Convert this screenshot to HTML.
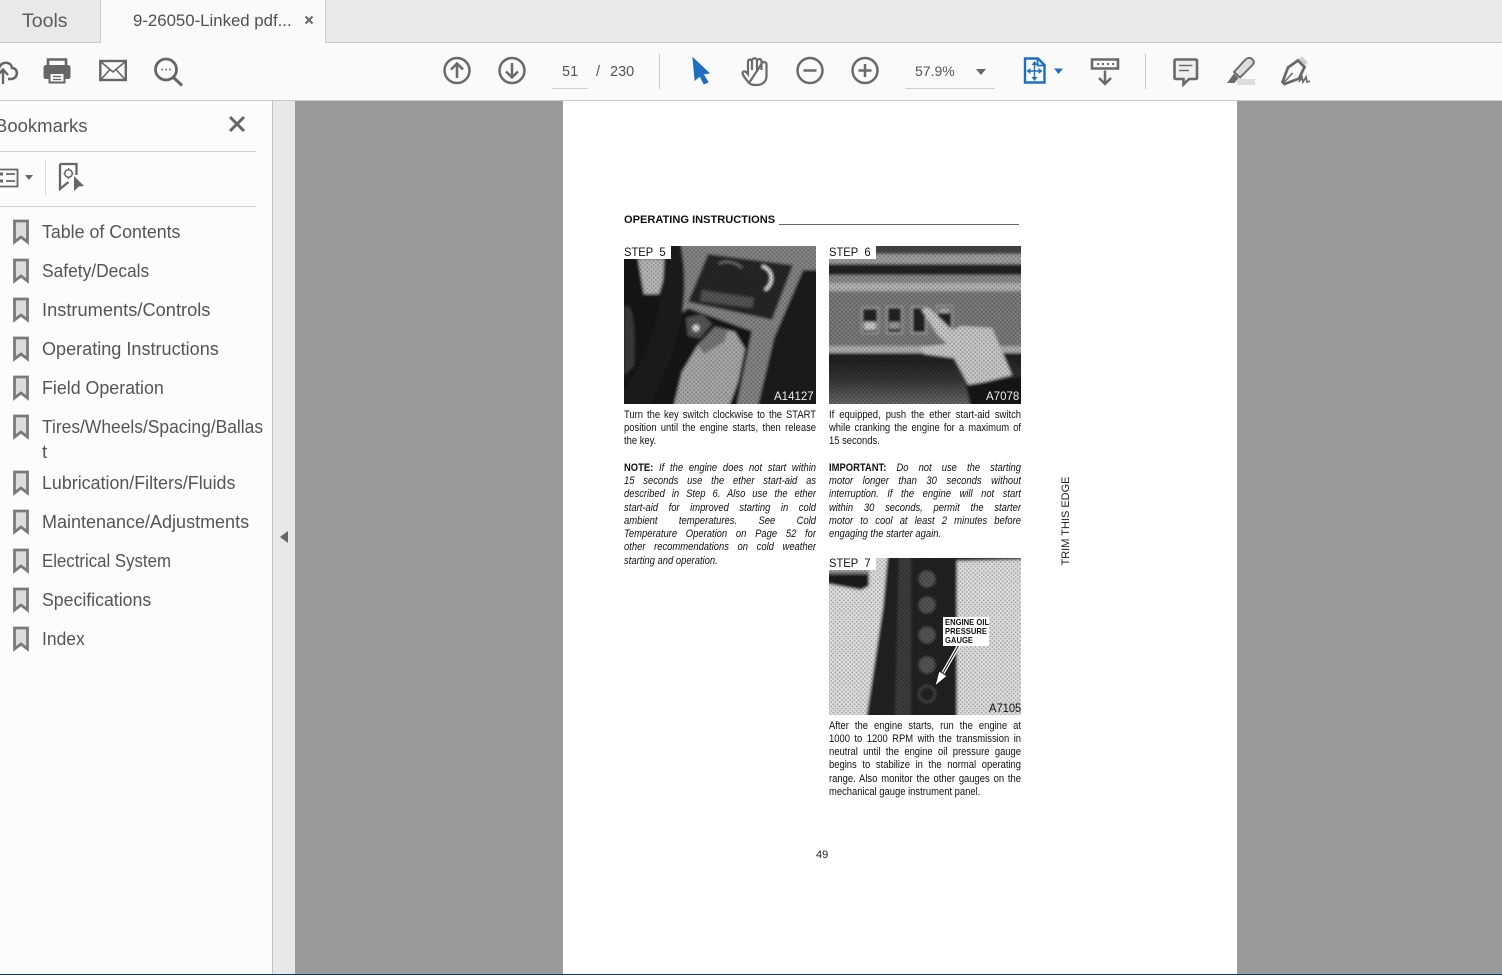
<!DOCTYPE html>
<html><head><meta charset="utf-8"><title>9-26050-Linked pdf</title>
<style>
html,body{margin:0;padding:0;width:1502px;height:975px;overflow:hidden;background:#fff;font-family:"Liberation Sans",sans-serif}
div{position:absolute}
svg{position:absolute;overflow:hidden}
.t{color:#505050;white-space:nowrap}
.bm{left:42px;font-size:18.7px;line-height:24px;color:#555;white-space:nowrap;transform-origin:0 0}
.l{width:222px;height:14px;overflow:hidden;transform:scaleX(.865);transform-origin:0 0;font-size:10.9px;line-height:13px;color:#111;text-align:justify;text-align-last:justify}
.e{text-align-last:left}
.i{font-style:italic}
.a{left:624px}.b{left:829px}
.s{font-size:11.5px;line-height:13px;color:#111;white-space:nowrap}
</style></head><body>

<!-- Tab bar -->
<div style="left:0;top:0;width:1502px;height:42px;background:#e9e9e9"></div>
<div style="left:0;top:42px;width:1502px;height:1px;background:#c9c9c9"></div>
<div style="left:100px;top:0;width:1px;height:43px;background:#cfcfcf"></div>
<div style="left:101px;top:0;width:224px;height:43px;background:#fafafa"></div>
<div style="left:325px;top:0;width:1px;height:43px;background:#cfcfcf"></div>
<div class="t" style="left:22px;top:9px;font-size:19.5px;line-height:24px;color:#5c5c5c">Tools</div>
<div class="t" style="left:133px;top:10px;font-size:16.8px;line-height:22px;color:#505050">9-26050-Linked pdf...</div>
<svg style="left:304px;top:15px" width="10" height="10" viewBox="0 0 10 10"><path d="M1.500 1.500L8.500 8.500M8.500 1.500L1.500 8.500" stroke="#666" stroke-width="2"/></svg>

<!-- Toolbar -->
<div style="left:0;top:43px;width:1502px;height:57px;background:#fafafa"></div>
<div style="left:0;top:100px;width:1502px;height:1px;background:#cacaca"></div>

<svg style="left:0;top:50px" width="340" height="45" viewBox="0 50 340 45" fill="none" stroke="#666" stroke-width="2.600">
 <!-- upload cloud -->
 <path d="M-5 79C-10 74 -7 68 -1 68C1 61 11 61 12 68C18 68 19 77 12 79H8"/>
 <path d="M3 84V70M-2 75L3 69.500L8 75" stroke-width="2.400"/>
 <!-- print -->
 <path d="M48 66V59.500H66V66" stroke-width="2.600"/>
 <path d="M46 65H68Q70.500 65 70.500 68V77Q70.500 79 68 79H46Q43.500 79 43.500 77V68Q43.500 65 46 65Z" fill="#666" stroke="none"/>
 <rect x="49.500" y="73" width="15" height="9.500" fill="#fafafa" stroke-width="2"/>
 <path d="M53 76.500H61M53 79.500H61" stroke-width="1.200"/>
 <!-- mail -->
 <rect x="100.300" y="61" width="25.500" height="19" stroke-width="2.400"/>
 <path d="M100.500 61.500L113 72L125.500 61.500M100.500 80L110 69.500M125.500 80L116 69.500" stroke-width="1.600"/>
 <!-- search -->
 <circle cx="166" cy="69.500" r="10.500" stroke-width="2.800"/>
 <path d="M173.500 77.500L182 85.500" stroke-width="3"/>
 <path d="M161.500 69.500h1.600M165.300 69.500h1.600M169.100 69.500h1.600" stroke-width="1.800"/>
</svg>

<svg style="left:430px;top:50px" width="900" height="45" viewBox="430 50 900 45" fill="none" stroke="#6a6a6a" stroke-width="2.500">
 <circle cx="457" cy="70.500" r="12.500"/><path d="M457 78V63.500M451 69.500L457 63.500L463 69.500"/>
 <circle cx="512" cy="70.500" r="12.500"/><path d="M512 63V77.500M506 71.500L512 77.500L518 71.500"/>
 <path d="M693 58L709 73L703 74L708 82L704 84L700 76L695 80Z" fill="#1f6fc1" stroke="#1f6fc1" stroke-width="1"/>
 <path d="M749 83C746 79 741 74 743 72C745 70 748 74 748 74V63M748 66V61.500C748 59 752 59 752 61.500V70M752 60.500C752 57.500 757 57.500 757 60.500V70M757 61C757 58.500 761.500 58.500 761.500 61V70M761.500 64C761.500 61.500 766.500 61.500 766.500 64V76C766.500 81 763 85 757 85C753.500 85 751 85 749 83Z" stroke-width="2.200"/>
 <circle cx="810" cy="70.500" r="12.500"/><path d="M803.500 70.500H816.500"/>
 <circle cx="865" cy="70.500" r="12.500"/><path d="M858.500 70.500H871.500M865 64V77"/>
 <path d="M976 69H986L981 75Z" fill="#666" stroke="none"/>
 <!-- fit page -->
 <path d="M1025 58.500H1038L1044.500 65V82.500H1025Z" stroke="#1f6fc1" stroke-width="2.400"/>
 <path d="M1037.500 58.500V65.500H1044.500" stroke="#1f6fc1" stroke-width="1.800"/>
 <path d="M1034.500 63V79M1028 71H1041" stroke="#1f6fc1" stroke-width="1.400"/>
 <path d="M1034.500 61L1037.500 65H1031.500ZM1034.500 81L1037.500 77H1031.500ZM1026.500 71L1030.500 68V74ZM1042.500 71L1038.500 68V74Z" fill="#1f6fc1" stroke="none"/>
 <path d="M1054 68.500H1063L1058.500 74Z" fill="#1f6fc1" stroke="none"/>
 <!-- scroll -->
 <path d="M1092 59.500H1118V68.500H1092Z" stroke-width="2.600"/>
 <path d="M1097 64h2M1102 64h2M1107 64h2M1112 64h2" stroke-width="2"/>
 <path d="M1105 70.500V84M1099 78L1105 84L1111 78" stroke-width="2.500"/>
 <!-- comment -->
 <path d="M1176 59.500H1195.500Q1197 59.500 1197 61V77.500Q1197 79 1195.500 79H1189L1183.500 84.500V79H1176Q1174.500 79 1174.500 77.500V61Q1174.500 59.500 1176 59.500Z" fill="#f0f0f0" stroke-width="2.600"/>
 <path d="M1179 65.500H1192.500M1179 70.500H1189" stroke-width="1.500"/>
 <!-- highlight -->
 <rect x="1237" y="79" width="18" height="6" fill="#dcdcdc" stroke="none"/>
 <path d="M1234 72L1246 59C1248 57.500 1251 57.500 1252.500 59.500C1254.500 61.500 1254 63.500 1252.500 65L1240 77.500Z" fill="#dedede" stroke="#6a6a6a" stroke-width="1.900"/>
 <path d="M1234 73.500L1238.500 78L1234.500 83L1227 83Z" fill="#6a6a6a" stroke="none"/>
 <!-- sign -->
 <path d="M1300 58L1306 64" stroke="#cfcfcf" stroke-width="5"/>
 <path d="M1298 60.500L1304.500 67L1299 78.500L1284.500 84L1282.500 82L1288 67.500Z" stroke-width="2.800"/>
 <path d="M1283.500 83L1292.500 73" stroke-width="1.600"/>
 <path d="M1299 82L1302 77L1303 82L1306 77L1307 82L1310 81" stroke-width="1.700"/>
</svg>

<div class="t" style="left:562px;top:63px;font-size:14.500px;line-height:18px;color:#555">51</div>
<div style="left:552px;top:88px;width:36px;height:1px;background:#cfcfcf"></div>
<div class="t" style="left:596px;top:63px;font-size:14.500px;line-height:18px;color:#555">/</div>
<div class="t" style="left:610px;top:63px;font-size:14.500px;line-height:18px;color:#555">230</div>
<div style="left:659px;top:54px;width:1px;height:35px;background:#c8c8c8"></div>
<div class="t" style="left:915px;top:62px;font-size:14px;line-height:18px;color:#555">57.9%</div>
<div style="left:905px;top:88px;width:90px;height:1px;background:#cfcfcf"></div>
<div style="left:1145px;top:54px;width:1px;height:35px;background:#c8c8c8"></div>

<!-- Sidebar -->
<div style="left:0;top:101px;width:272px;height:873px;background:#fcfcfc"></div>
<div style="left:272px;top:101px;width:1px;height:873px;background:#c4c4c4"></div>
<div style="left:273px;top:101px;width:22px;height:873px;background:#e8e8e8"></div>
<svg style="left:279px;top:530px" width="10" height="14" viewBox="0 0 10 14"><path d="M9 1V13L1 7Z" fill="#666"/></svg>

<div class="bm" style="left:-5px;top:114px;font-size:18.500px">Bookmarks</div>
<svg style="left:228px;top:115px" width="18" height="18" viewBox="0 0 18 18"><path d="M2 2L16 16M16 2L2 16" stroke="#666" stroke-width="3"/></svg>
<div style="left:0;top:151px;width:256px;height:1px;background:#cfcfcf"></div>
<svg style="left:0;top:160px" width="90" height="36" viewBox="0 160 90 36" fill="none" stroke="#666">
 <path d="M-3 169.500H17.500V186.500H-3Z" stroke-width="1.800"/>
 <path d="M-1 172.500h4v3h-4zM-1 179.500h4v3h-4z" fill="#666" stroke="none"/>
 <path d="M6 174H15M6 181H15" stroke-width="1.800"/>
 <path d="M25 175H33L29 180Z" fill="#666" stroke="none"/>
 <path d="M60 164H76.500V175M60 164V189L68.500 182" stroke-width="2.300"/>
 <circle cx="68.500" cy="173.500" r="3.800" stroke-width="1.500"/>
 <path d="M68.500 168v2M68.500 177v2M63.500 173.500h2M71.500 173.500h2" stroke-width="1.200"/>
 <path d="M74 176L84 186L79 186.500L74 191Z" fill="#666" stroke="none"/>
</svg>
<div style="left:45px;top:160px;width:1px;height:35px;background:#d8d8d8"></div>
<div style="left:0;top:206px;width:256px;height:1px;background:#cfcfcf"></div>

<svg style="left:12px;top:218px" width="20" height="440" viewBox="0 0 20 440" fill="#dcdcdc" stroke="#7a7a7a" stroke-width="2.800">
 <path d="M2.500 3H15.500V24L9 19L2.500 24Z"/>
 <path d="M2.500 42H15.500V63L9 58L2.500 63Z"/>
 <path d="M2.500 81H15.500V102L9 97L2.500 102Z"/>
 <path d="M2.500 120H15.500V141L9 136L2.500 141Z"/>
 <path d="M2.500 159H15.500V180L9 175L2.500 180Z"/>
 <path d="M2.500 198H15.500V219L9 214L2.500 219Z"/>
 <path d="M2.500 254H15.500V275L9 270L2.500 275Z"/>
 <path d="M2.500 293H15.500V314L9 309L2.500 314Z"/>
 <path d="M2.500 332H15.500V353L9 348L2.500 353Z"/>
 <path d="M2.500 371H15.500V392L9 387L2.500 392Z"/>
 <path d="M2.500 410H15.500V431L9 426L2.500 431Z"/>
</svg>
<div class="bm" style="top:220px;transform:scaleX(.952)">Table of Contents</div>
<div class="bm" style="top:259px;transform:scaleX(.93)">Safety/Decals</div>
<div class="bm" style="top:298px;transform:scaleX(.977)">Instruments/Controls</div>
<div class="bm" style="top:337px;transform:scaleX(.967)">Operating Instructions</div>
<div class="bm" style="top:376px;transform:scaleX(.953)">Field Operation</div>
<div class="bm" style="top:415px;transform:scaleX(.932)">Tires/Wheels/Spacing/Ballas</div>
<div class="bm" style="top:440px">t</div>
<div class="bm" style="top:471px;transform:scaleX(.955)">Lubrication/Filters/Fluids</div>
<div class="bm" style="top:510px;transform:scaleX(.963)">Maintenance/Adjustments</div>
<div class="bm" style="top:549px;transform:scaleX(.9)">Electrical System</div>
<div class="bm" style="top:588px;transform:scaleX(.947)">Specifications</div>
<div class="bm" style="top:627px;transform:scaleX(.935)">Index</div>

<!-- Main -->
<div style="left:295px;top:101px;width:1207px;height:873px;background:#9a9a9a"></div>
<div style="left:563px;top:101px;width:674px;height:873px;background:#fff"></div>
<div style="left:0;top:974px;width:1502px;height:1px;background:#0d3a5c"></div>

<!-- Page -->
<div style="left:624px;top:213px;font-size:11.300px;line-height:14px;font-weight:bold;color:#111;white-space:nowrap;transform:scaleX(.98);transform-origin:0 0">OPERATING INSTRUCTIONS</div>
<div style="left:779px;top:224px;width:240px;height:1px;background:#666"></div>

<svg style="left:0;top:0" width="1502" height="975">
 <defs>
  <pattern id="d" width="3" height="3" patternUnits="userSpaceOnUse" patternTransform="rotate(45)">
   <circle cx="1.500" cy="1.500" r=".9" fill="#000" opacity=".3"/>
  </pattern>
  <filter id="b" x="-5%" y="-5%" width="110%" height="110%"><feGaussianBlur stdDeviation="1.300"/></filter>
  <linearGradient id="g6" x1="0" y1="0" x2="0" y2="1"><stop offset="0" stop-color="#1c1c1c"/><stop offset=".45" stop-color="#333"/><stop offset="1" stop-color="#707070"/></linearGradient>
 </defs>

 <!-- Step 5 -->
 <svg x="624" y="246" width="192" height="158" viewBox="0 0 192 158">
  <g filter="url(#b)">
  <rect x="-5" y="-5" width="202" height="168" fill="#161616"/>
  <path d="M56 -5H197V163H112L128 85L64 62L54 70Z" fill="#858585"/>
  <path d="M84 8L169 19L148 74L64 56Z" fill="#262626"/>
  <path d="M78 44L130 52L128 62L76 55Z" fill="#555"/>
  <path d="M95 18C100 14 112 16 118 22" fill="none" stroke="#777" stroke-width="2"/>
  <path d="M138 20C150 24 150 38 141 44" fill="none" stroke="#e8e8e8" stroke-width="3"/>
  <path d="M179 24H197V163H133L150 92Z" fill="#1c1c1c"/>
  <path d="M14 13H45L35 48L20 48Z" fill="#b8b8b8"/>
  <path d="M56 -5C66 40 60 90 34 140L24 163H-5V150C25 115 42 60 40 -5Z" fill="#1e1e1e"/>
  <path d="M0 60C8 58 12 70 10 120L0 130Z" fill="#3a3a3a"/>
  <path d="M49 163L58 126L74 99L91 81L111 86L121 103L114 136L104 163Z" fill="#a8a8a8"/>
  <path d="M74 99L91 81L104 84L100 96L80 108Z" fill="#777"/>
  <path d="M62 72L78 68L88 78L76 92L64 90Z" fill="#555"/>
  <circle cx="72" cy="82" r="3.500" fill="#ddd"/>
  </g>
  <rect width="192" height="158" fill="url(#d)"/>
  <rect width="47" height="13" fill="#fff"/>
 </svg>

 <!-- Step 6 -->
 <svg x="829" y="246" width="192" height="158" viewBox="0 0 192 158">
  <g filter="url(#b)">
  <rect x="-5" y="-5" width="202" height="168" fill="#7c7c7c"/>
  <rect x="-5" y="-5" width="202" height="13" fill="#444"/>
  <rect x="-5" y="8" width="202" height="10" fill="#a0a0a0"/>
  <rect x="-5" y="18" width="202" height="11" fill="#222"/>
  <rect x="-5" y="29" width="202" height="8" fill="#8a8a8a"/>
  <rect x="-5" y="37" width="202" height="8" fill="#b5b5b5"/>
  <rect x="-5" y="45" width="202" height="55" fill="#7a7a7a"/>
  <rect x="-5" y="100" width="202" height="7" fill="#b0b0b0"/>
  <rect x="-5" y="107" width="202" height="56" fill="url(#g6)"/>
  <g fill="#222" stroke="#c4c4c4" stroke-width="1"><rect x="33" y="62" width="16" height="25"/><rect x="58" y="61" width="15" height="26"/><rect x="83" y="61" width="14" height="26"/><rect x="108" y="60" width="15" height="22"/></g>
  <rect x="35" y="76" width="12" height="8" fill="#ccc"/><rect x="60" y="76" width="11" height="7" fill="#999"/><rect x="110" y="62" width="11" height="5" fill="#aaa"/>
  <path d="M92 63L100 62L123 84L132 80L163 82L183 129L140 140L125 112L95 108L91 101L118 98L108 88Z" fill="#c8c8c8"/>
  <path d="M137 139L195 130V163H142Z" fill="#181818"/>
  </g>
  <rect width="192" height="158" fill="url(#d)"/>
  <rect width="47" height="13" fill="#fff"/>
 </svg>

 <!-- Step 7 -->
 <svg x="829" y="558" width="192" height="157" viewBox="0 0 192 157">
  <g filter="url(#b)">
  <rect x="-5" y="-5" width="202" height="167" fill="#dedede"/>
  <path d="M-5 12H40V28L32 32L-5 25Z" fill="#1c1c1c"/>
  <path d="M-5 12H40V16H-5Z" fill="#888"/>
  <path d="M59 -5H197V1.500L128 3L128 162H37L54 49Z" fill="#222"/>
  <path d="M70 -5H82V162H66Z" fill="#3c3c3c"/>
  <g fill="#555" stroke="#111" stroke-width="1"><circle cx="98" cy="21" r="9"/><circle cx="98" cy="47" r="9"/><circle cx="98" cy="77" r="9"/><circle cx="98" cy="107" r="9"/></g>
  <circle cx="98" cy="136" r="8" fill="#222" stroke="#555" stroke-width="1.500"/>
  </g>
  <rect width="192" height="157" fill="url(#d)"/>
  <rect width="47" height="12" fill="#fff"/>
  <path d="M130 87L110 122" stroke="#fff" stroke-width="3.500"/>
  <path d="M130 87L110 122" stroke="#111" stroke-width="1"/>
  <path d="M106 128L110 113L118 118Z" fill="#fff" stroke="#111" stroke-width=".8"/>
  <rect x="114" y="59" width="46" height="29" fill="#fff"/>
 </svg>
</svg>

<div class="s" style="left:624px;top:247px;transform:scaleX(.97);transform-origin:0 0">STEP&nbsp; 5</div>
<div class="s" style="left:829px;top:247px;transform:scaleX(.97);transform-origin:0 0">STEP&nbsp; 6</div>
<div class="s" style="left:829px;top:558px;transform:scaleX(.97);transform-origin:0 0">STEP&nbsp; 7</div>
<div class="s" style="left:774px;top:391px;color:#eee">A14127</div>
<div class="s" style="left:986px;top:391px;color:#eee">A7078</div>
<div class="s" style="left:989px;top:703px;transform:scaleX(.97);transform-origin:0 0">A7105</div>
<div style="left:945px;top:618px;font-size:8.300px;line-height:9px;font-weight:bold;color:#111;white-space:nowrap;transform:scaleX(.92);transform-origin:0 0">ENGINE OIL<br>PRESSURE<br>GAUGE</div>

<div class="l a" style="top:409px">Turn the key switch clockwise to the START</div>
<div class="l a" style="top:422px">position until the engine starts, then release</div>
<div class="l a e" style="top:435px">the key.</div>
<div class="l a" style="top:462px"><b>NOTE:</b> <span class="i">If the engine does not start within</span></div>
<div class="l a i" style="top:475px">15 seconds use the ether start-aid as</div>
<div class="l a i" style="top:488px">described in Step 6. Also use the ether</div>
<div class="l a i" style="top:502px">start-aid for improved starting in cold</div>
<div class="l a i" style="top:515px">ambient temperatures. See Cold</div>
<div class="l a i" style="top:528px">Temperature Operation on Page 52 for</div>
<div class="l a i" style="top:541px">other recommendations on cold weather</div>
<div class="l a i e" style="top:555px">starting and operation.</div>

<div class="l b" style="top:409px">If equipped, push the ether start-aid switch</div>
<div class="l b" style="top:422px">while cranking the engine for a maximum of</div>
<div class="l b e" style="top:435px">15 seconds.</div>
<div class="l b" style="top:462px"><b>IMPORTANT:</b> <span class="i">Do not use the starting</span></div>
<div class="l b i" style="top:475px">motor longer than 30 seconds without</div>
<div class="l b i" style="top:488px">interruption. If the engine will not start</div>
<div class="l b i" style="top:502px">within 30 seconds, permit the starter</div>
<div class="l b i" style="top:515px">motor to cool at least 2 minutes before</div>
<div class="l b i e" style="top:528px">engaging the starter again.</div>

<div class="l b" style="top:720px">After the engine starts, run the engine at</div>
<div class="l b" style="top:733px">1000 to 1200 RPM with the transmission in</div>
<div class="l b" style="top:746px">neutral until the engine oil pressure gauge</div>
<div class="l b" style="top:759px">begins to stabilize in the normal operating</div>
<div class="l b" style="top:773px">range. Also monitor the other gauges on the</div>
<div class="l b e" style="top:786px">mechanical gauge instrument panel.</div>

<div style="left:816px;top:849px;font-size:11px;line-height:13px;color:#222">49</div>
<div style="left:1066px;top:521px;width:0;height:0"><div style="left:-60px;top:-7px;width:120px;height:14px;font-size:11px;line-height:14px;color:#222;text-align:center;white-space:nowrap;transform:rotate(-90deg)">TRIM THIS EDGE</div></div>

</body></html>
